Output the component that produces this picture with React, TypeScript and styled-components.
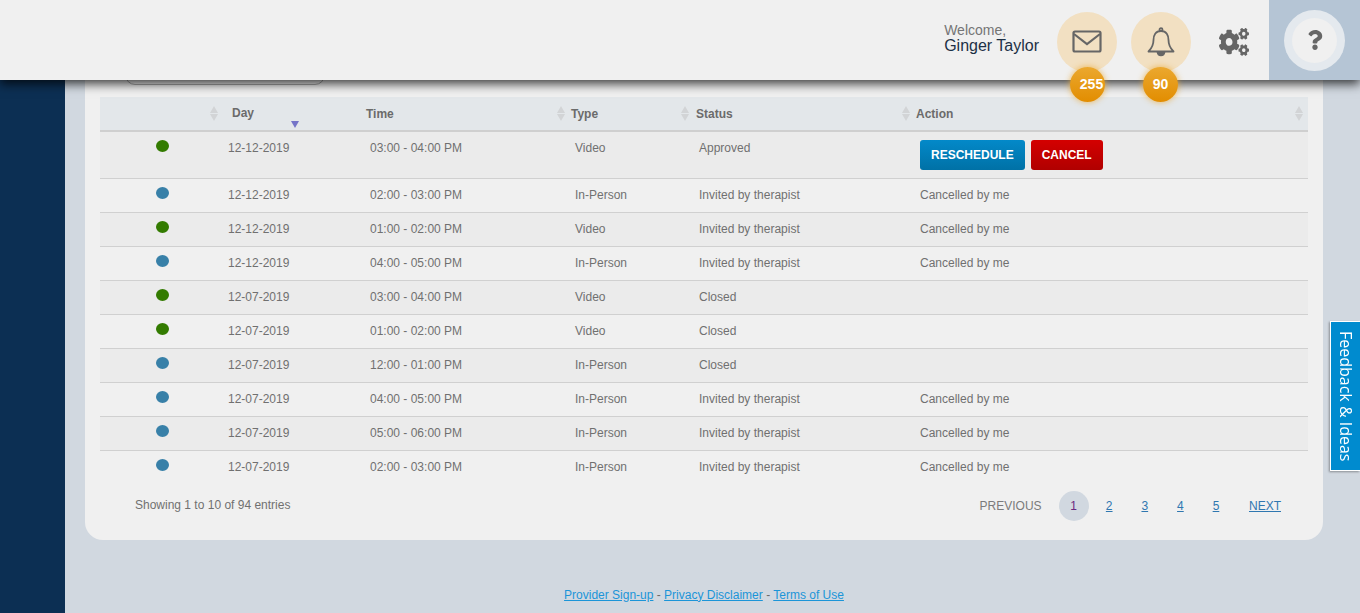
import styled, { createGlobalStyle } from 'styled-components';
import { FaCogs, FaQuestion } from 'react-icons/fa';

const rows = [
  { kind: 'video', day: '12-12-2019', time: '03:00 - 04:00 PM', type: 'Video', status: 'Approved', action: 'buttons' },
  { kind: 'person', day: '12-12-2019', time: '02:00 - 03:00 PM', type: 'In-Person', status: 'Invited by therapist', action: 'Cancelled by me' },
  { kind: 'video', day: '12-12-2019', time: '01:00 - 02:00 PM', type: 'Video', status: 'Invited by therapist', action: 'Cancelled by me' },
  { kind: 'person', day: '12-12-2019', time: '04:00 - 05:00 PM', type: 'In-Person', status: 'Invited by therapist', action: 'Cancelled by me' },
  { kind: 'video', day: '12-07-2019', time: '03:00 - 04:00 PM', type: 'Video', status: 'Closed', action: '' },
  { kind: 'video', day: '12-07-2019', time: '01:00 - 02:00 PM', type: 'Video', status: 'Closed', action: '' },
  { kind: 'person', day: '12-07-2019', time: '12:00 - 01:00 PM', type: 'In-Person', status: 'Closed', action: '' },
  { kind: 'person', day: '12-07-2019', time: '04:00 - 05:00 PM', type: 'In-Person', status: 'Invited by therapist', action: 'Cancelled by me' },
  { kind: 'person', day: '12-07-2019', time: '05:00 - 06:00 PM', type: 'In-Person', status: 'Invited by therapist', action: 'Cancelled by me' },
  { kind: 'person', day: '12-07-2019', time: '02:00 - 03:00 PM', type: 'In-Person', status: 'Invited by therapist', action: 'Cancelled by me' },
];

const App = () => {
  return (
    <Page>
      <GlobalStyle />
      <Header>
        <Welcome>
          <WelcomeLabel>Welcome,</WelcomeLabel>
          <WelcomeName>Ginger Taylor</WelcomeName>
        </Welcome>
        <IconCircle>
          <svg width="30" height="24" viewBox="0 0 30 24" fill="none" stroke="#666" strokeWidth="2.2">
            <rect x="1.5" y="1.5" width="27" height="20" rx="1.5" />
            <path d="M2 4 L15 14 L28 4" />
          </svg>
          <Badge $left={13} $shift={8}>255</Badge>
        </IconCircle>
        <IconCircle>
          <svg width="28" height="30" viewBox="0 0 28 30" fill="none" stroke="#666" strokeWidth="1.8" strokeLinejoin="round">
            <path d="M14 4 C8.5 4 6.5 8.5 6.5 13 C6.5 18 5 21 1.5 24.5 L26.5 24.5 C23 21 21.5 18 21.5 13 C21.5 8.5 19.5 4 14 4 Z" />
            <circle cx="14" cy="2.6" r="1.5" />
            <path d="M10.5 25 C11 29.5 17 29.5 17.5 25 Z" fill="#666" />
          </svg>
          <Badge $left={12} $shift={0}>90</Badge>
        </IconCircle>
        <SettingsIcon>
          <Cogs preserveAspectRatio="none" />
        </SettingsIcon>
        <HelpPanel>
          <HelpRing>
            <HelpButton>
              <FaQuestion size={20} color="#666" />
            </HelpButton>
          </HelpRing>
        </HelpPanel>
      </Header>

      <Body>
        <Sidebar />
        <Content>
          <Card>
            <SearchPill />
            <Table>
              <colgroup>
                <col width="124" />
                <col width="138" />
                <col width="205" />
                <col width="124" />
                <col width="221" />
                <col width="396" />
              </colgroup>
              <thead>
                <tr>
                  <Th><SortArrows $right={5} /></Th>
                  <Th $pad={8}>
                    <DayLabel>Day</DayLabel>
                    <SortDown />
                  </Th>
                  <Th>Time<SortArrows $right={1} /></Th>
                  <Th>Type<SortArrows $right={1} /></Th>
                  <Th $pad={5}>Status<SortArrows $right={1} /></Th>
                  <Th>Action<SortArrows $right={4} /></Th>
                </tr>
              </thead>
              <tbody>
                {rows.map((row, i) => (
                  <Row key={i} $odd={i % 2 === 0}>
                    <DotCell><Dot $kind={row.kind} /></DotCell>
                    <Td $pad={4}>{row.day}</Td>
                    <Td>{row.time}</Td>
                    <Td>{row.type}</Td>
                    <Td>{row.status}</Td>
                    {row.action === 'buttons' ? (
                      <ButtonCell>
                        <Buttons>
                          <ActionButton $color="blue">RESCHEDULE</ActionButton>
                          <ActionButton $color="red">CANCEL</ActionButton>
                        </Buttons>
                      </ButtonCell>
                    ) : (
                      <Td>{row.action}</Td>
                    )}
                  </Row>
                ))}
              </tbody>
            </Table>
            <TableFooter>
              <Showing>Showing 1 to 10 of 94 entries</Showing>
              <Pagination>
                <Previous>PREVIOUS</Previous>
                <Pages>
                  <CurrentPage>1</CurrentPage>
                  <PageLink>2</PageLink>
                  <PageLink>3</PageLink>
                  <PageLink>4</PageLink>
                  <PageLink>5</PageLink>
                </Pages>
                <Next>NEXT</Next>
              </Pagination>
            </TableFooter>
          </Card>
          <Footer>
            <FooterLink>Provider Sign-up</FooterLink> - <FooterLink>Privacy Disclaimer</FooterLink> - <FooterLink>Terms of Use</FooterLink>
          </Footer>
        </Content>
      </Body>

      <FeedbackTab>Feedback &amp; Ideas</FeedbackTab>
    </Page>
  );
};

export default App;

const GlobalStyle = createGlobalStyle`
html, body {
  margin: 0;
  padding: 0;
  height: 100%;
  overflow: hidden;
  background: #d1d8e0;
  font-family: "Liberation Sans", Arial, sans-serif;
}
`;

const Page = styled.div`
  width: 100%;
  height: 613px;
  display: flex;
  flex-direction: column;
  overflow: hidden;
`;

const Header = styled.header`
  position: relative;
  z-index: 5;
  flex: 0 0 80px;
  display: flex;
  align-items: flex-start;
  justify-content: flex-end;
  background: #f0f0f0;
  box-shadow: 0 4px 10px rgba(0, 0, 0, 0.75);
`;

const Welcome = styled.div`
  margin-right: 18px;
  padding-top: 22px;
`;

const WelcomeLabel = styled.div`
  font-size: 14px;
  line-height: 16px;
  color: #757575;
`;

const WelcomeName = styled.div`
  font-size: 16px;
  line-height: 16px;
  color: #1d3046;
`;

const IconCircle = styled.div`
  position: relative;
  width: 60px;
  height: 60px;
  margin-top: 12px;
  margin-right: 14px;
  border-radius: 50%;
  background: #f2e0c2;
  display: flex;
  align-items: center;
  justify-content: center;
`;

const Badge = styled.div<{ $left: number; $shift: number }>`
  position: absolute;
  left: ${(p) => p.$left}px;
  top: 55px;
  box-sizing: border-box;
  width: 35px;
  height: 35px;
  padding-left: ${(p) => p.$shift}px;
  border-radius: 50%;
  background: linear-gradient(#eba82f, #e28d00);
  box-shadow: 0 0 6px rgba(235, 168, 47, 0.8);
  color: #fff;
  font-size: 14px;
  font-weight: bold;
  line-height: 35px;
  text-align: center;
`;

const SettingsIcon = styled.div`
  width: 30px;
  height: 28px;
  margin: 28px 20px 0 14px;
`;

const Cogs = styled(FaCogs)`
  display: block;
  width: 30px;
  height: 28px;
  color: #666;
`;

const HelpPanel = styled.div`
  width: 91px;
  height: 80px;
  background: #b5c5d5;
  display: flex;
  align-items: center;
  justify-content: center;
`;

const HelpRing = styled.div`
  width: 61px;
  height: 61px;
  border-radius: 50%;
  background: #e4e9ee;
  display: flex;
  align-items: center;
  justify-content: center;
`;

const HelpButton = styled.div`
  width: 45px;
  height: 45px;
  border-radius: 50%;
  background: #f0f0f0;
  display: flex;
  align-items: center;
  justify-content: center;
`;

const Body = styled.div`
  flex: 1;
  display: flex;
  min-height: 0;
`;

const Sidebar = styled.aside`
  flex: 0 0 65px;
  background: #0c2f53;
`;

const Content = styled.main`
  flex: 1;
  padding: 0 37px 0 20px;
  display: flex;
  flex-direction: column;
`;

const Card = styled.section`
  background: #f0f0f0;
  padding: 0 15px;
  border-radius: 0 0 18px 18px;
`;

const SearchPill = styled.div`
  box-sizing: border-box;
  width: 200px;
  height: 25px;
  margin: -20px 0 12px 25px;
  border: 1px solid #a8a8a8;
  border-radius: 10px;
`;

const Table = styled.table`
  width: 1208px;
  table-layout: fixed;
  border-collapse: collapse;
  font-size: 12px;
  line-height: 14px;
  color: #707070;
`;

const Th = styled.th<{ $pad?: number }>`
  position: relative;
  box-sizing: border-box;
  height: 34px;
  padding: 0 0 0 ${(p) => p.$pad ?? 4}px;
  background: #e3e7ea;
  border-bottom: 2px solid #cfcfcf;
  font-size: 12px;
  font-weight: bold;
  text-align: left;
  color: #6b6b6b;
`;

const DayLabel = styled.span`
  position: relative;
  top: -1px;
`;

const SortArrows = styled.span<{ $right: number }>`
  position: absolute;
  right: ${(p) => p.$right}px;
  top: 9px;
  width: 9px;
  height: 15px;
  &::before, &::after {
    content: '';
    position: absolute;
    left: 0;
    border-left: 4.5px solid transparent;
    border-right: 4.5px solid transparent;
  }
  &::before {
    top: 0;
    border-bottom: 7px solid #d2d4d6;
  }
  &::after {
    bottom: 0;
    border-top: 7px solid #d2d4d6;
  }
`;

const SortDown = styled.span`
  position: absolute;
  left: 67px;
  top: 24px;
  border-left: 4.5px solid transparent;
  border-right: 4.5px solid transparent;
  border-top: 7px solid #7474c8;
`;

const Row = styled.tr<{ $odd: boolean }>`
  background: ${(p) => (p.$odd ? '#ebebeb' : '#f0f0f0')};
  border-bottom: 1px solid #d0d0d0;
  &:last-child {
    border-bottom: none;
  }
`;

const Td = styled.td<{ $pad?: number }>`
  box-sizing: border-box;
  height: 34px;
  padding: 9px 0 0 ${(p) => p.$pad ?? 8}px;
  vertical-align: top;
`;

const DotCell = styled.td`
  padding: 0;
  vertical-align: top;
  text-align: center;
`;

const Dot = styled.span<{ $kind: string }>`
  display: block;
  width: 13px;
  height: 12px;
  margin: 8px auto 0;
  border-radius: 50%;
  background: ${(p) => (p.$kind === 'video' ? '#337b00' : '#3880a8')};
`;

const ButtonCell = styled.td`
  padding: 8px 0 8px 8px;
`;

const Buttons = styled.div`
  display: flex;
  gap: 6px;
`;

const ActionButton = styled.button<{ $color: 'blue' | 'red' }>`
  height: 30px;
  padding: 0 11px;
  border: none;
  border-radius: 3px;
  background: ${(p) => (p.$color === 'blue'
    ? 'linear-gradient(#0389c9, #0071a6)'
    : 'linear-gradient(#d40000, #b00000)')};
  color: #fff;
  font-family: "Liberation Sans", Arial, sans-serif;
  font-size: 12px;
  font-weight: bold;
`;

const TableFooter = styled.div`
  display: flex;
  align-items: center;
  justify-content: space-between;
  height: 55px;
  padding: 0 27px 14px 35px;
  box-sizing: border-box;
`;

const Showing = styled.div`
  font-size: 12px;
  color: #707070;
`;

const Pagination = styled.nav`
  display: flex;
  align-items: center;
  margin-top: 2px;
  font-size: 12px;
`;

const Previous = styled.span`
  margin-right: 17px;
  color: #7b7b7b;
`;

const Pages = styled.div`
  display: flex;
  gap: 5.6px;
  margin-right: 18px;
`;

const PageLink = styled.a`
  width: 30px;
  height: 30px;
  line-height: 30px;
  text-align: center;
  color: #2f77b0;
  text-decoration: underline;
`;

const CurrentPage = styled.span`
  width: 30px;
  height: 30px;
  line-height: 30px;
  text-align: center;
  border-radius: 50%;
  background: #d1d8e0;
  color: #6b2a80;
`;

const Next = styled.a`
  color: #2f77b0;
  text-decoration: underline;
`;

const Footer = styled.footer`
  margin-top: 48px;
  font-size: 12px;
  line-height: 14px;
  color: #6b6b6b;
  text-align: center;
`;

const FooterLink = styled.a`
  color: #1b95d8;
  text-decoration: underline;
`;

const FeedbackTab = styled.div`
  position: fixed;
  right: 0;
  top: 321px;
  box-sizing: border-box;
  width: 30px;
  height: 150px;
  border: 1px solid #fff;
  border-right: none;
  background: #008bcf;
  box-shadow: -1px 1px 2px rgba(0, 0, 0, 0.35);
  color: #fff;
  font-family: "Open Sans", sans-serif;
  font-size: 16px;
  line-height: 28px;
  text-align: center;
  writing-mode: vertical-rl;
`;
